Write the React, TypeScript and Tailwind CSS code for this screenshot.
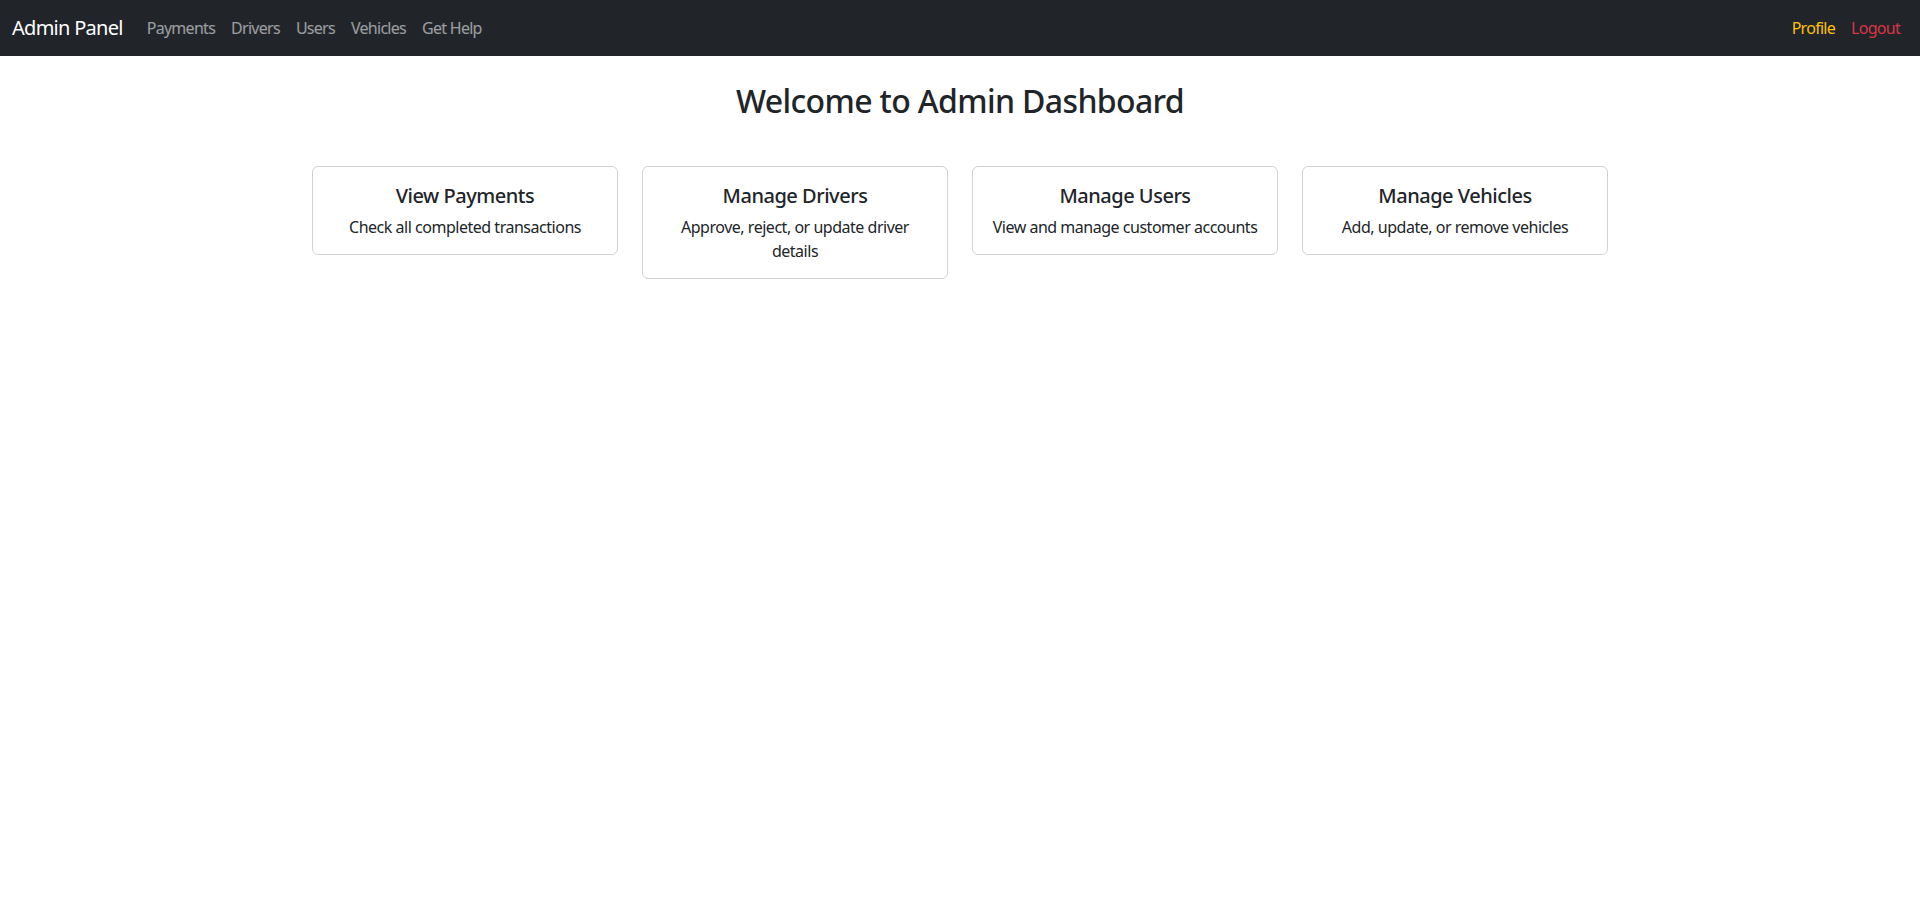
import React from "react";

const cards = [
  { title: "View Payments", text: "Check all completed transactions" },
  { title: "Manage Drivers", text: "Approve, reject, or update driver details" },
  { title: "Manage Users", text: "View and manage customer accounts" },
  { title: "Manage Vehicles", text: "Add, update, or remove vehicles" },
];

export default function App() {
  return (
    <div
      className="min-h-screen bg-white text-[#212529] text-base leading-normal tracking-[-0.03em]"
      style={{ fontFamily: '"Segoe UI", "Noto Sans", "Open Sans", sans-serif' }}
    >
      <nav className="h-14 bg-[#212529] flex items-center justify-between px-3 tracking-[-0.045em]">
        <div className="flex items-center">
          <a className="text-[20px] text-white mr-4 py-[5px] leading-[1.5]">Admin Panel</a>
          <div className="flex items-center">
            {["Payments", "Drivers", "Users", "Vehicles", "Get Help"].map((l) => (
              <a key={l} className="px-2 py-2 text-white/55">
                {l}
              </a>
            ))}
          </div>
        </div>
        <div className="flex items-center">
          <a className="px-2 py-2 text-[#ffc107]">Profile</a>
          <a className="px-2 py-2 text-[#dc3545]">Logout</a>
        </div>
      </nav>
      <main className="w-[1320px] mx-auto px-3 pt-[26px]">
        <h2 className="text-[32px] font-medium leading-[1.2] text-center mb-[46px] tracking-[-0.02em]">
          Welcome to Admin Dashboard
        </h2>
        <div className="grid grid-cols-4 gap-6 items-start">
          {cards.map((c) => (
            <div
              key={c.title}
              className="border border-black/[0.175] rounded-md pt-[17px] pb-[15px] px-4 text-center"
            >
              <h5 className="text-[20px] font-medium leading-[1.2] mb-[7px]">{c.title}</h5>
              <p className="leading-6">{c.text}</p>
            </div>
          ))}
        </div>
      </main>
    </div>
  );
}
